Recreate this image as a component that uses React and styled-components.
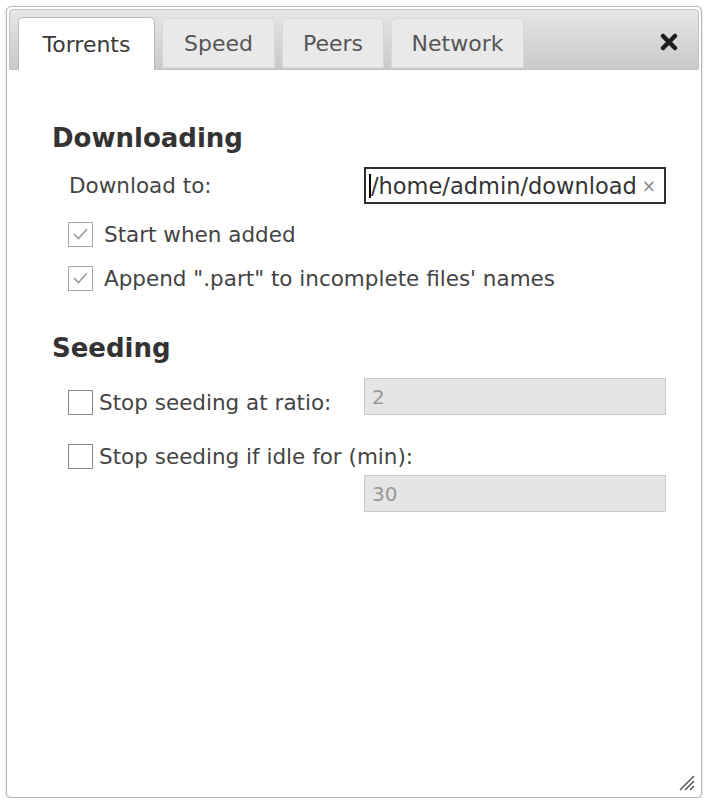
import React from 'react';
import styled, { createGlobalStyle } from 'styled-components';

const GlobalStyle = createGlobalStyle`
  html, body {
    margin: 0;
    padding: 0;
    background: #ffffff;
  }
  body {
    font-family: "DejaVu Sans", Verdana, sans-serif;
  }
`;

// The whole preferences dialog
const Dialog = styled.div`
  box-sizing: border-box;
  display: flex;
  flex-direction: column;
  margin: 6px 0 0 6px;
  width: 696px;
  height: 792px;
  padding: 2px;
  background: #ffffff;
  border: 1px solid #b4b4b4;
  border-radius: 5px;
  box-shadow: 0 1px 3px rgba(0, 0, 0, 0.18);
  position: relative;
`;

const TabBar = styled.div`
  box-sizing: border-box;
  display: flex;
  align-items: flex-end;
  gap: 7px;
  height: 61px;
  padding: 0 19px 0 8px;
  background: linear-gradient(#e6e6e6, #c9c9c9);
  border: 1px solid #c2c2c2;
  border-radius: 4px 4px 0 0;
`;

const Tab = styled.div`
  box-sizing: border-box;
  display: flex;
  align-items: center;
  justify-content: center;
  width: ${p => p.width}px;
  height: ${p => (p.active ? 53 : 50)}px;
  margin-bottom: ${p => (p.active ? -1 : 1)}px;
  background: ${p => (p.active ? '#ffffff' : '#e9e9e9')};
  border: 1px solid ${p => (p.active ? '#b9b9b9' : '#d9d9d9')};
  border-bottom: ${p => (p.active ? 'none' : '1px solid #d9d9d9')};
  border-radius: 5px 5px 0 0;
  color: ${p => (p.active ? '#3a3a3a' : '#555555')};
  font-size: 22px;
  padding-top: 1px;
`;

const CloseButton = styled.div`
  margin-left: auto;
  align-self: center;
  display: flex;
  margin-top: 4px;
`;

const Content = styled.div`
  display: flex;
  flex-direction: column;
  padding: 53px 33px 0 43px;
  color: #444444;
  font-size: 21.5px;
`;

const Heading = styled.h2`
  margin: ${p => p.gap || 0}px 0 0 0;
  font-size: 26px;
  line-height: 30px;
  font-weight: bold;
  color: #333333;
`;

const FieldRow = styled.div`
  display: flex;
  align-items: center;
  justify-content: space-between;
  margin-top: 14px;
  padding-left: 17px;
`;

const PathField = styled.div`
  box-sizing: border-box;
  display: flex;
  align-items: center;
  width: 302px;
  height: 37px;
  padding: 0 8px 0 3px;
  border: 2px solid #2e2e2e;
  color: #333333;
  font-size: 22.5px;
`;

const Caret = styled.span`
  width: 2px;
  height: 24px;
  background: #000000;
`;

const PathText = styled.span`
  flex: 1;
  overflow: hidden;
  white-space: nowrap;
`;

const Clear = styled.span`
  color: #888888;
  font-size: 17px;
  margin-left: 5px;
`;

const CheckRow = styled.label`
  display: flex;
  align-items: ${p => p.align || 'center'};
  justify-content: space-between;
  height: ${p => p.height || 44}px;
  margin-top: ${p => p.gap || 0}px;
  padding-left: 16px;
`;

const CheckLabel = styled.span`
  display: flex;
  align-items: center;
  gap: ${p => p.gap}px;
`;

const Box = styled.span`
  box-sizing: border-box;
  display: flex;
  align-items: center;
  justify-content: center;
  width: 25px;
  height: 25px;
  border: 1.5px solid ${p => (p.checked ? '#a8a8a8' : '#8a8a8a')};
  background: #ffffff;
`;

const NumberField = styled.div`
  box-sizing: border-box;
  display: flex;
  align-items: center;
  width: 302px;
  height: 37px;
  padding-left: 7px;
  background: #e5e5e5;
  border: 1px solid #c9c9c9;
  color: #999999;
  font-size: 20px;
  align-self: ${p => p.alone ? 'flex-end' : 'auto'};
  margin-top: ${p => p.gap || 0}px;
`;

const Grip = styled.div`
  position: absolute;
  right: 6px;
  bottom: 6px;
  display: flex;
`;

const Check = ({checked}) =>
    <Box checked={checked}>
        {checked &&
         <svg width="17" height="14" viewBox="0 0 17 14">
             <path d="M2 7 L6.5 11.5 L15 2"
                   fill="none" stroke="#9a9a9a" strokeWidth="1.6" />
         </svg>}
    </Box>;

const tabs = [
    {name: 'Torrents', width: 137, active: true},
    {name: 'Speed', width: 113},
    {name: 'Peers', width: 102},
    {name: 'Network', width: 133},
];

export default function App() {
    return <>
        <GlobalStyle />
        <Dialog>
            <TabBar>
                {tabs.map(t =>
                    <Tab key={t.name} width={t.width} active={t.active}>
                        {t.name}
                    </Tab>)}
                <CloseButton>
                    <svg width="20" height="20" viewBox="0 0 20 20">
                        <path d="M4 4 L16 16 M16 4 L4 16"
                              stroke="#1e1e1e" strokeWidth="4.5" strokeLinecap="round" />
                    </svg>
                </CloseButton>
            </TabBar>
            <Content>
                <Heading>Downloading</Heading>
                <FieldRow>
                    <span>Download to:</span>
                    <PathField>
                        <Caret />
                        <PathText>/home/admin/downloads</PathText>
                        <Clear>×</Clear>
                    </PathField>
                </FieldRow>
                <CheckRow gap={8}>
                    <CheckLabel gap={11}>
                        <Check checked />
                        Start when added
                    </CheckLabel>
                </CheckRow>
                <CheckRow>
                    <CheckLabel gap={11}>
                        <Check checked />
                        Append ".part" to incomplete files' names
                    </CheckLabel>
                </CheckRow>
                <Heading gap={33}>Seeding</Heading>
                <CheckRow gap={15} height={37} align="flex-end">
                    <CheckLabel gap={6}>
                        <Check />
                        Stop seeding at ratio:
                    </CheckLabel>
                    <NumberField>2</NumberField>
                </CheckRow>
                <CheckRow gap={26} height={30}>
                    <CheckLabel gap={6}>
                        <Check />
                        Stop seeding if idle for (min):
                    </CheckLabel>
                </CheckRow>
                <NumberField alone gap={4}>30</NumberField>
            </Content>
            <Grip>
                <svg width="16" height="16" viewBox="0 0 16 16">
                    <path d="M15 1 L1 15 M15 6 L6 15 M15 11 L11 15"
                          stroke="#555" strokeWidth="1.5" />
                </svg>
            </Grip>
        </Dialog>
    </>;
}
